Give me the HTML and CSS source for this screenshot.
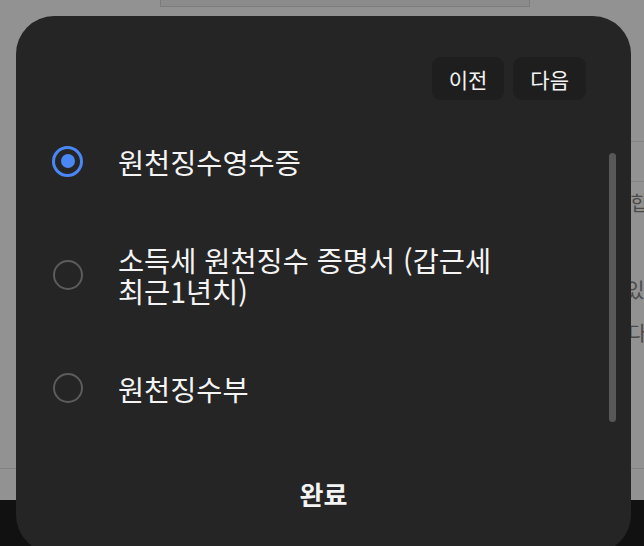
FILE: index.html
```html
<!DOCTYPE html>
<html lang="ko">
<head>
<meta charset="utf-8">
<link rel="stylesheet" href="styles.css">
</head>
<body>
<div class="page">
  <div class="page-top"><div class="topbox"></div></div>
  <div class="rule rule-side"></div>
  <div class="page-row"></div>
  <div class="rule rule-side"></div>
  <div class="page-body">
    <p class="frag frag-1">총합</p>
    <p class="frag frag-2">있</p>
    <p class="frag frag-3">다</p>
  </div>
  <div class="rule"></div>
  <div class="page-foot"></div>
  <div class="navbar"></div>
</div>

<div class="sheet">
  <div class="sheet-head">
    <button class="nav-btn">이전</button>
    <button class="nav-btn">다음</button>
  </div>
  <div class="sheet-body">
    <ul class="options">
      <li class="option">
        <span class="radio radio-on"><span class="radio-dot"></span></span>
        <span class="option-label">원천징수영수증</span>
      </li>
      <li class="option">
        <span class="radio"></span>
        <span class="option-label">소득세 원천징수 증명서 (갑근세 최근1년치)</span>
      </li>
      <li class="option">
        <span class="radio"></span>
        <span class="option-label">원천징수부</span>
      </li>
    </ul>
    <div class="scrollbar"></div>
  </div>
  <div class="sheet-foot">완료</div>
</div>
</body>
</html>
```
FILE: styles.css
```css
html, body {
  margin: 0;
  padding: 0;
}
body {
  width: 644px;
  height: 546px;
  overflow: hidden;
  position: relative;
  background: #929292;
  font-family: "Noto Sans CJK KR", "Noto Sans", sans-serif;
}
.page {
  display: flex;
  flex-direction: column;
}
.page-top {
  height: 141px;
}
.topbox {
  margin-left: 160px;
  width: 370px;
  height: 7px;
  box-sizing: border-box;
  background: #8b8b8b;
  border: 1px solid #7c7c7c;
  border-top: none;
}
.rule {
  height: 1px;
  background: #828282;
}
.rule-side {
  margin-left: 600px;
}
.page-row {
  height: 39px;
}
.page-body {
  height: 286px;
  display: flex;
  flex-direction: column;
}
.frag {
  margin: 0;
  font-size: 20px;
  line-height: 24px;
  color: #4a4a4a;
  white-space: nowrap;
}
.frag-1 { padding-left: 612px; margin-top: 9px; }
.frag-2 { padding-left: 626px; margin-top: 63px; }
.frag-3 { padding-left: 628px; margin-top: 19px; }
.page-foot {
  height: 31px;
}
.navbar {
  height: 46px;
  background: #111111;
}

.sheet {
  position: absolute;
  left: 16px;
  top: 16px;
  width: 615px;
  height: 537px;
  background: #252525;
  border-radius: 38px;
  display: flex;
  flex-direction: column;
  color: #f4f4f4;
}
.sheet-head {
  display: flex;
  justify-content: flex-end;
  gap: 9px;
  padding: 41px 45px 0 0;
}
.nav-btn {
  height: 43px;
  padding: 0 17px;
  border: none;
  border-radius: 9px;
  background: #1e1e1e;
  color: #f4f4f4;
  font-family: inherit;
  font-size: 21px;
}
.sheet-body {
  display: flex;
  margin-top: 12px;
}
.options {
  flex: 1;
  list-style: none;
  margin: 0;
  padding: 0;
}
.option {
  display: flex;
  align-items: center;
  padding: 33.5px 0 33.5px 36px;
}
.radio {
  flex: none;
  width: 30px;
  height: 30px;
  box-sizing: border-box;
  border: 2px solid #5c5c5c;
  border-radius: 50%;
  margin: 0.5px;
}
.radio-on {
  width: 31px;
  height: 31px;
  margin: 0;
  border: 3px solid #4a87f5;
  display: flex;
  align-items: center;
  justify-content: center;
}
.radio-dot {
  width: 14px;
  height: 14px;
  border-radius: 50%;
  background: #4a87f5;
}
.option-label {
  margin-left: 35px;
  margin-right: 90px;
  font-size: 28.4px;
  line-height: 31px;
  word-break: keep-all;
}
.scrollbar {
  flex: none;
  width: 7px;
  height: 269px;
  margin: 41px 15px 0 0;
  border-radius: 4px;
  background: #585858;
}
.sheet-foot {
  margin-top: 41px;
  text-align: center;
  font-size: 26px;
  font-weight: 700;
  line-height: 32px;
}
```
